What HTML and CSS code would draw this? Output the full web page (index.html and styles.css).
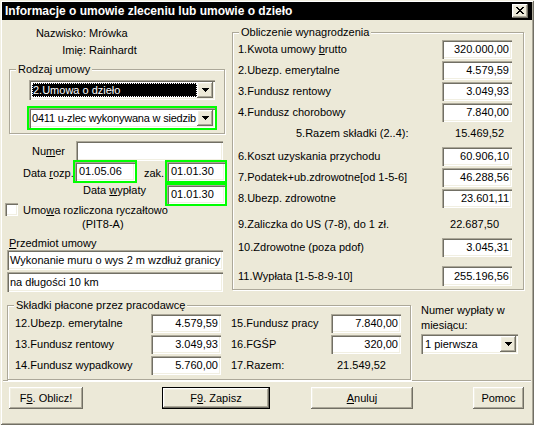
FILE: index.html
```html
<!DOCTYPE html>
<html lang="pl">
<head>
<meta charset="utf-8">
<title>Informacje o umowie</title>
<link rel="stylesheet" href="styles.css">
</head>
<body>
<div class="window">
  <div class="titlebar">
    <span class="title">Informacje o umowie zleceniu lub umowie o dzieło</span>
    <span class="close raised"><svg width="8" height="7" viewBox="0 0 8 7" shape-rendering="crispEdges"><path d="M0 0h2v1H0zM6 0h2v1H6zM1 1h2v1H1zM5 1h2v1H5zM2 2h4v1H2zM3 3h2v1H3zM2 4h4v1H2zM1 5h2v1H1zM5 5h2v1H5zM0 6h2v1H0zM6 6h2v1H6z"/></svg></span>
  </div>

  <div class="top">
    <div class="left">
      <div class="person">
        <span class="plabel">Nazwisko:</span><span>Mrówka</span>
        <span class="plabel">Imię:</span><span>Rainhardt</span>
      </div>

      <div class="group rodzaj">
        <div class="legend">Rodzaj umowy</div>
        <div class="combo c1">
          <div class="ctext"><span class="sel">2.Umowa o dzieło</span></div>
          <div class="cbtn raised"><svg width="7" height="4" viewBox="0 0 7 4" shape-rendering="crispEdges"><path d="M0 0h7v1H0zM1 1h5v1H1zM2 2h3v1H2zM3 3h1v1H3z"/></svg></div>
        </div>
        <div class="green gcombo">
          <div class="combo c2">
            <div class="ctext">0411 u-zlec wykonywana w siedzib</div>
            <div class="cbtn raised"><svg width="7" height="4" viewBox="0 0 7 4" shape-rendering="crispEdges"><path d="M0 0h7v1H0zM1 1h5v1H1zM2 2h3v1H2zM3 3h1v1H3z"/></svg></div>
          </div>
        </div>
      </div>

      <div class="numer-row">
        <span class="lbl l-numer">Nu<u>m</u>er</span>
        <div class="edit"></div>
      </div>

      <div class="dates">
        <span class="lbl l-rozp">Data <u>r</u>ozp.</span>
        <div class="green"><div class="edit date">01.05.06</div></div>
        <span class="lbl l-zak">zak.</span>
        <div class="green"><div class="edit date">01.01.30</div></div>
        <span class="lbl l-wyp">Data <u>w</u>ypłaty</span>
        <div class="green g-wyp"><div class="edit date">01.01.30</div></div>
      </div>

      <div class="chk-row">
        <span class="chk"></span>
        <div class="chk-label">
          <div>Umo<u>w</u>a rozliczona ryczałtowo</div>
          <div class="pit">(PIT8-A)</div>
        </div>
      </div>

      <div class="lbl przedmiot"><u>P</u>rzedmiot umowy</div>
      <div class="edit wide">Wykonanie muru o wys 2 m wzdłuż granicy</div>
      <div class="edit wide w2">na długości 10 km</div>
    </div>

    <div class="group calc">
      <div class="legend">Obliczenie wynagrodzenia</div>
      <div class="crow r1"><span>1.Kwota umowy <u>b</u>rutto</span><div class="edit num">320.000,00</div></div>
      <div class="crow"><span>2.Ubezp. emerytalne</span><div class="edit num">4.579,59</div></div>
      <div class="crow"><span>3.Fundusz rentowy</span><div class="edit num">3.049,93</div></div>
      <div class="crow"><span>4.Fundusz chorobowy</span><div class="edit num">7.840,00</div></div>
      <div class="crow"><span class="razem">5.Razem składki (2..4):</span><span class="val v5">15.469,52</span></div>
      <div class="crow r6"><span>6.Koszt uzyskania przychodu</span><div class="edit num">60.906,10</div></div>
      <div class="crow"><span>7.Podatek+ub.zdrowotne[od 1-5-6]</span><div class="edit num">46.288,56</div></div>
      <div class="crow"><span>8.Ubezp. zdrowotne</span><div class="edit num">23.601,11</div></div>
      <div class="crow r9"><span>9.Zaliczka do US (7-8), do 1 zł.</span><span class="val v9">22.687,50</span></div>
      <div class="crow r10"><span>10.Zdrowotne (poza pdof)</span><div class="edit num">3.045,31</div></div>
      <div class="crow r11"><span>11.Wypłata [1-5-8-9-10]</span><div class="edit num">255.196,56</div></div>
    </div>
  </div>

  <div class="bottom">
    <div class="group skladki">
      <div class="legend">Składki płacone przez pracodawcę</div>
      <div class="sgrid">
        <span class="sl">12.Ubezp. emerytalne</span><div class="edit num">4.579,59</div>
        <span class="sl2">15.Fundusz pracy</span><div class="edit num">7.840,00</div>
        <span class="sl">13.Fundusz rentowy</span><div class="edit num">3.049,93</div>
        <span class="sl2">16.FGŚP</span><div class="edit num">320,00</div>
        <span class="sl">14.Fundusz wypadkowy</span><div class="edit num">5.760,00</div>
        <span class="sl2">17.Razem:</span><span class="val v17">21.549,52</span>
      </div>
    </div>
    <div class="nr-panel">
      <div class="nr-text">Numer wypłaty w<br>miesiącu:</div>
      <div class="combo c3">
        <div class="ctext">1 pierwsza</div>
        <div class="cbtn raised"><svg width="7" height="4" viewBox="0 0 7 4" shape-rendering="crispEdges"><path d="M0 0h7v1H0zM1 1h5v1H1zM2 2h3v1H2zM3 3h1v1H3z"/></svg></div>
      </div>
    </div>
  </div>

  <div class="sep"></div>

  <div class="buttons">
    <div class="btn raised b-f5">F<u>5</u>. Oblicz!</div>
    <div class="btn-default b-f9"><div class="btn raised">F<u>9</u>. Zapisz</div></div>
    <div class="btn raised b-anuluj"><u>A</u>nuluj</div>
    <div class="btn raised b-pomoc">Pomoc</div>
  </div>
</div>
</body>
</html>
```

FILE: styles.css
```css
* { box-sizing: border-box; margin: 0; padding: 0; }
html, body { width: 534px; height: 425px; overflow: hidden; background: #ECE9D8; }
body {
  font-family: "Liberation Sans", Arial, sans-serif;
  font-size: 11px;
  line-height: 13px;
  color: #000;
}
u { text-decoration: underline; text-underline-offset: 1px; }

.window {
  width: 534px;
  height: 425px;
  background: #ECE9D8;
  padding-top: 2px;
  box-shadow: inset 1px 1px #F1EFE2, inset -1px -1px #716F64, inset 2px 2px #fff, inset -2px -2px #ACA899;
}

.raised {
  background: #ECE9D8;
  box-shadow: inset -1px -1px #716F64, inset 1px 1px #fff, inset -2px -2px #ACA899, inset 2px 2px #F1EFE2;
}

.titlebar {
  margin: 0 2px;
  height: 18px;
  background: #000;
  display: flex;
  align-items: center;
  justify-content: space-between;
  padding: 0 4px 0 3px;
}
.title { color: #fff; font-weight: bold; font-size: 12px; line-height: 18px; white-space: nowrap; }
.close {
  width: 16px; height: 14px;
  display: flex; align-items: center; justify-content: center;
  padding-bottom: 1px;
}

/* generic controls */
.lbl { white-space: nowrap; }
.edit {
  background: #fff;
  box-shadow: inset 1px 1px #ACA899, inset 2px 2px #716F64, inset -1px -1px #fff, inset -2px -2px #F1EFE2;
  padding: 0 3px 0 4px;
  white-space: nowrap;
  overflow: hidden;
}
.edit.num { text-align: right; }

.green { border: 2px solid #00FF00; }

.combo {
  display: flex;
  background: #fff;
  box-shadow: inset 1px 1px #ACA899, inset 2px 2px #716F64, inset -1px -1px #fff, inset -2px -2px #F1EFE2;
  padding: 2px;
}
.ctext {
  flex: 1;
  min-width: 0;
  overflow: hidden;
  white-space: nowrap;
  padding-left: 2px;
  line-height: 16px;
}
.cbtn {
  width: 16px;
  flex: none;
  display: flex; align-items: center; justify-content: center;
}

.group {
  border: 1px solid #ACA899;
  box-shadow: 1px 1px 0 #fff, inset 1px 1px 0 #fff;
}
.legend {
  width: max-content;
  background: #ECE9D8;
  padding: 0 2px;
  margin: -7px 0 -6px 6px;
  line-height: 13px;
  height: 13px;
}

/* layout */
.top { display: flex; height: 278px; }
.left { width: 222px; margin-left: 5px; }

.person {
  display: grid;
  grid-template-columns: 81px auto;
  column-gap: 3px;
  line-height: 17px;
  margin-top: 5px;
}
.plabel { text-align: right; }

.rodzaj { margin: 10px 0 0 4px; width: 216px; height: 65px; }
.c1 { margin: 10px 0 0 19px; width: 186px; height: 20px; }
.c1 .ctext { padding: 1px 0 1px 1px; line-height: 14px; }
.sel {
  display: block;
  background: #000;
  color: #fff;
  outline: 1px dotted #fff;
  outline-offset: -1px;
  padding-left: 1px;
  height: 14px;
}
.gcombo { margin: 6px 0 0 17px; width: 190px; height: 24px; }
.c2 { width: 186px; height: 20px; }
.c2 .ctext { letter-spacing: -0.2px; padding-left: 1px; }

.numer-row {
  display: grid;
  grid-template-columns: 71px 147px;
  height: 20px;
  margin-top: 7px;
  align-items: center;
}
.l-numer { padding-left: 27px; }
.numer-row .edit { height: 20px; }

.dates {
  display: grid;
  grid-template-columns: 68px 64px 28px 62px;
  grid-template-rows: 23px 23px;
  margin-top: -1px;
}
.dates .edit { height: 19px; line-height: 19px; }
.l-rozp { padding: 7px 0 0 18px; }
.l-zak { padding: 7px 0 0 7px; }
.l-wyp { grid-column: 1 / 4; padding: 1px 0 0 78px; }
.g-wyp { grid-column: 4; }

.chk-row { display: flex; margin-top: -3px; height: 28px; }
.chk {
  width: 13px; height: 13px;
  flex: none;
  background: #fff;
  box-shadow: inset 1px 1px #ACA899, inset 2px 2px #716F64, inset -1px -1px #fff, inset -2px -2px #F1EFE2;
}
.chk-label { margin-left: 5px; line-height: 14px; white-space: nowrap; }
.pit { padding-left: 59px; }

.przedmiot { margin-top: 6px; padding-left: 4px; }
.wide { margin-left: 2px; width: 216px; height: 20px; line-height: 20px; padding-left: 3px; }
.w2 { margin-top: 2px; }

/* right group */
.calc { margin: 12px 0 0 5px; width: 292px; height: 258px; }
.crow {
  display: flex;
  align-items: center;
  height: 19px;
  padding-left: 5px;
  margin-top: 2px;
  white-space: nowrap;
}
.crow .edit { margin-left: auto; margin-right: 11px; width: 70px; height: 19px; line-height: 19px; }
.crow .val { margin-left: auto; margin-right: 11px; width: 70px; text-align: right; }
.r1 { margin-top: 7px; }
.r6 { margin-top: 4px; }
.r9 { margin-top: 7px; }
.r10 { margin-top: 4px; }
.r11 { margin-top: 9px; height: 20px; }
.r11 .edit { height: 20px; line-height: 20px; }
.razem { margin-left: 58px; }
.v5 { padding-right: 8px; }
.v9 { padding-right: 13px; }

/* bottom */
.bottom { display: flex; margin-left: 7px; height: 82px; }
.skladki { margin-top: 7px; width: 404px; height: 75px; }
.sgrid {
  display: grid;
  grid-template-columns: 143px 70px 110px 70px;
  grid-auto-rows: 19px;
  row-gap: 2px;
  margin-top: 8px;
  align-items: center;
  white-space: nowrap;
}
.sgrid .edit { height: 19px; line-height: 19px; }
.sl { padding-left: 7px; }
.sl2 { padding-left: 10px; }
.v17 { padding-left: 6px; }

.nr-panel { margin: 5px 0 0 10px; }
.nr-text { line-height: 15px; }
.c3 { margin-top: 1px; width: 97px; height: 20px; }

.sep {
  margin: 0 3px;
  height: 2px;
  border-top: 1px solid #ACA899;
  border-bottom: 1px solid #fff;
}

.buttons { display: flex; margin: 5px 0 0 9px; height: 22px; }
.btn {
  height: 22px;
  display: flex; align-items: center; justify-content: center;
  white-space: nowrap;
}
.b-f5 { width: 74px; }
.btn-default { margin-left: 79px; width: 108px; height: 22px; border: 1px solid #000; }
.btn-default .btn { height: 20px; }
.b-anuluj { margin-left: 41px; width: 102px; }
.b-pomoc { margin-left: 60px; width: 51px; }
```
